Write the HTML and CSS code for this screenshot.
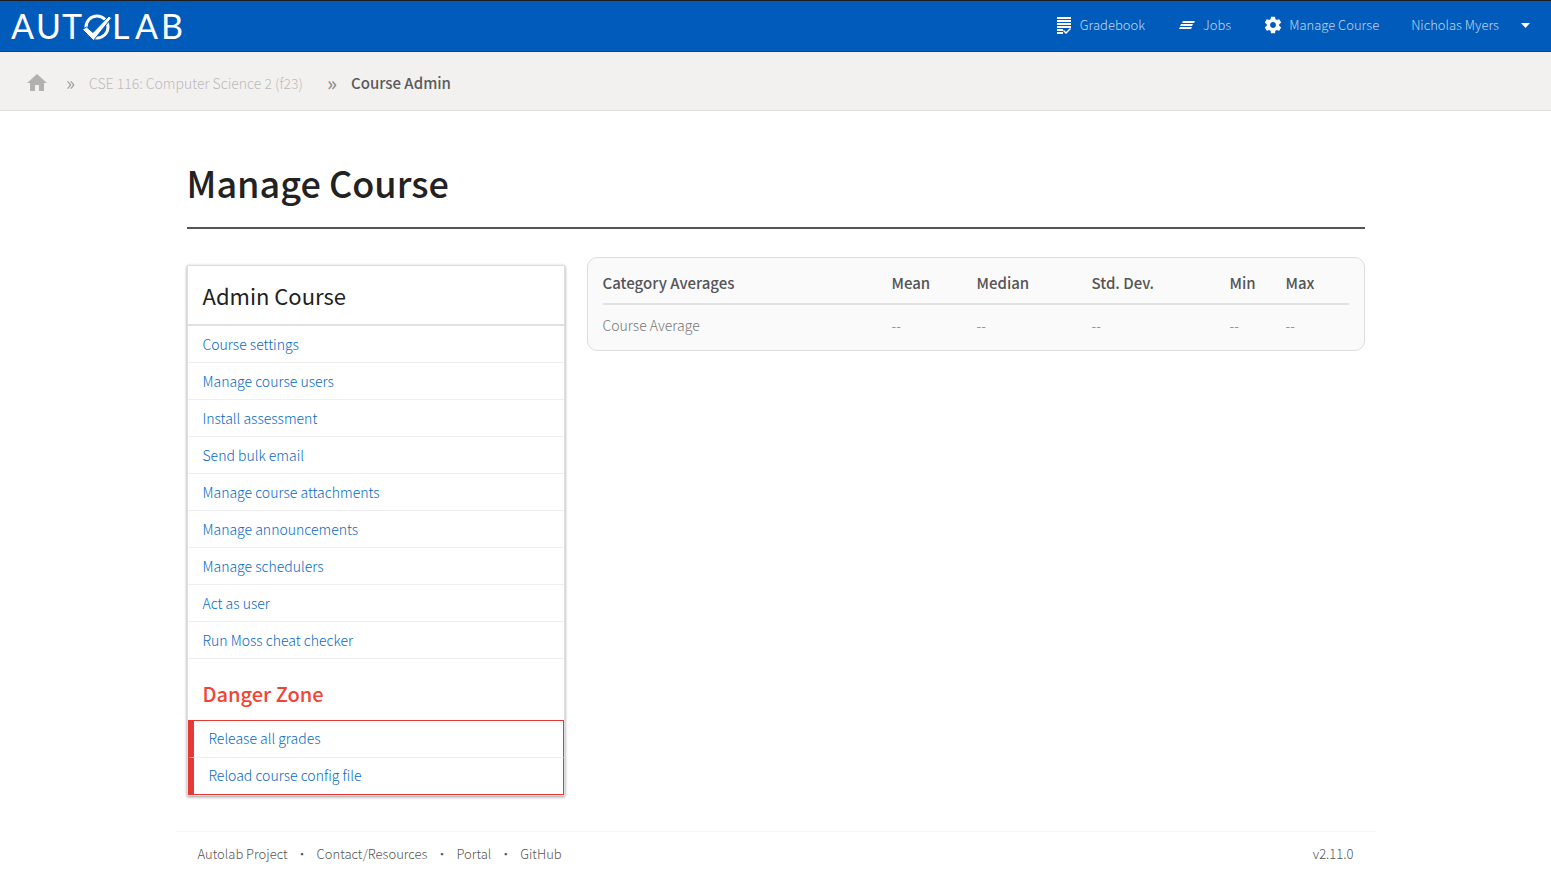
FILE: index.html
```html
<!doctype html>
<html lang="en">
<head>
    <meta charset="UTF-8">
    <meta name="viewport" content="width=device-width, initial-scale=1.0">
    <title>Manage Course - Autolab</title>
    <link rel="stylesheet" href="styles.css">
</head>
<body>
    <nav class="navbar">
        <a href="#" class="logo" aria-label="Autolab">
            <svg width="180" height="50" viewBox="0 0 180 50">
                <g class="logo__text">
                    <text x="0" y="38">A</text>
                    <text x="25" y="38">U</text>
                    <text x="51" y="38">T</text>
                    <text x="101" y="38">L</text>
                    <text x="124" y="38">A</text>
                    <text x="150" y="38">B</text>
                </g>
                <circle cx="86" cy="26" r="11" fill="none" stroke="#fff" stroke-width="3"/>
                <path d="M71.500 28.500l4-2.500 6.500 5.500L98 15l2.500 2L82.500 39.500z" fill="#fff" stroke="#005bbb" stroke-width="1"/>
            </svg>
        </a>
        <ul class="navbar__links">
            <li>
                <a href="#">
                    <svg class="icon" viewBox="0 0 20 20"><path d="M3 2h14v2H3zM3 5h14v2H3zM3 8h14v2H3zM3 11h14v2H3zM3 14h6v2H3zM3 17h6v2H3zM16 13l1 1-5 5-3-3 1-1 2 2z"/></svg>
                    Gradebook
                </a>
            </li>
            <li>
                <a href="#">
                    <svg class="icon" viewBox="0 0 20 20"><path d="M6 6h12l-1 2H5zM4 9h12l-1 2H3zM3 12h12l-1 2H2z"/></svg>
                    Jobs
                </a>
            </li>
            <li>
                <a href="#">
                    <svg class="icon" viewBox="0 0 24 24"><path d="M19.430 12.980c.04-.32.07-.64.07-.98s-.03-.66-.07-.98l2.110-1.650c.19-.15.24-.42.12-.64l-2-3.460c-.12-.22-.39-.3-.61-.22l-2.490 1c-.52-.4-1.080-.73-1.690-.98l-.38-2.650C14.460 2.180 14.250 2 14 2h-4c-.25 0-.46.18-.49.42l-.38 2.650c-.61.25-1.170.59-1.690.98l-2.490-1c-.23-.09-.49 0-.61.22l-2 3.460c-.13.22-.07.49.12.64l2.110 1.650c-.04.32-.07.65-.07.98s.03.66.07.98l-2.110 1.650c-.19.15-.24.42-.12.64l2 3.460c.12.22.39.3.61.22l2.490-1c.52.4 1.080.73 1.690.98l.38 2.650c.03.24.24.42.49.42h4c.25 0 .46-.18.49-.42l.38-2.650c.61-.25 1.170-.59 1.690-.98l2.490 1c.23.09.49 0 .61-.22l2-3.460c.12-.22.07-.49-.12-.64l-2.110-1.650zM12 15.500c-1.930 0-3.500-1.570-3.500-3.500s1.570-3.500 3.500-3.500 3.500 1.570 3.500 3.500-1.570 3.500-3.500 3.500z"/></svg>
                    Manage Course
                </a>
            </li>
            <li>
                <a href="#">
                    Nicholas Myers
                    <svg class="icon icon--caret" viewBox="0 0 20 20"><path d="M6 8h9l-4.500 5z"/></svg>
                </a>
            </li>
        </ul>
    </nav>

    <div class="breadcrumbs">
        <a href="#" class="breadcrumbs__home" aria-label="Home">
            <svg width="24" height="24" viewBox="0 0 24 24"><path d="M10 20v-6h4v6h5v-8h3L12 3 2 12h3v8z"/></svg>
        </a>
        <span class="breadcrumbs__sep">»</span>
        <a href="#">CSE 116: Computer Science 2 (f23)</a>
        <span class="breadcrumbs__sep breadcrumbs__sep--last">»</span>
        <span class="breadcrumbs__current">Course Admin</span>
    </div>

    <main class="container">
        <h1>Manage Course</h1>
        <div class="row">
            <div class="col">
                <div class="card">
                    <h2>Admin Course</h2>
                    <ul class="options">
                        <li><a href="#">Course settings</a></li>
                        <li><a href="#">Manage course users</a></li>
                        <li><a href="#">Install assessment</a></li>
                        <li><a href="#">Send bulk email</a></li>
                        <li><a href="#">Manage course attachments</a></li>
                        <li><a href="#">Manage announcements</a></li>
                        <li><a href="#">Manage schedulers</a></li>
                        <li><a href="#">Act as user</a></li>
                        <li><a href="#">Run Moss cheat checker</a></li>
                    </ul>
                    <h3>Danger Zone</h3>
                    <ul class="options options--danger">
                        <li><a href="#">Release all grades</a></li>
                        <li><a href="#">Reload course config file</a></li>
                    </ul>
                </div>
            </div>
            <div class="col">
                <div class="averages">
                    <table>
                        <colgroup>
                            <col class="col-name">
                            <col class="col-mean">
                            <col class="col-median">
                            <col class="col-dev">
                            <col class="col-min">
                            <col>
                        </colgroup>
                        <thead>
                            <tr>
                                <th>Category Averages</th>
                                <th>Mean</th>
                                <th>Median</th>
                                <th>Std. Dev.</th>
                                <th>Min</th>
                                <th>Max</th>
                            </tr>
                        </thead>
                        <tbody>
                            <tr>
                                <td>Course Average</td>
                                <td>--</td>
                                <td>--</td>
                                <td>--</td>
                                <td>--</td>
                                <td>--</td>
                            </tr>
                        </tbody>
                    </table>
                </div>
            </div>
        </div>
    </main>

    <footer class="footer">
        <ul>
            <li><a href="#">Autolab Project</a></li>
            <li><a href="#">Contact/Resources</a></li>
            <li><a href="#">Portal</a></li>
            <li><a href="#">GitHub</a></li>
        </ul>
        <span>v2.11.0</span>
    </footer>
</body>
</html>
```
FILE: styles.css
```css
*, ::before, ::after {
    padding: 0;
    margin: 0;
    box-sizing: border-box;
}
body {
    font-family: 'Source Sans Pro', 'Noto Sans CJK SC', sans-serif;
    font-size: 14px;
    font-weight: 300;
    line-height: 24px;
    color: #555555;
    background: #ffffff;
}
a {
    text-decoration: none;
    color: inherit;
}
ul {
    list-style: none;
}

/* top bar */
.navbar {
    display: flex;
    justify-content: space-between;
    align-items: center;
    height: 52px;
    padding-left: 11px;
    background: #005bbb;
    border-top: 1px solid #1c1c1c;
    border-bottom: 1px solid #0a4690;
}
.logo svg {
    display: block;
}
.logo__text {
    font-family: Lato, sans-serif;
    font-size: 34px;
    font-weight: 400;
    line-height: 40px;
    fill: #ffffff;
}
.navbar__links {
    display: flex;
    padding-bottom: 2px;
    color: rgba(255, 255, 255, .75);
    font-size: 13px;
}
.navbar__links a {
    display: flex;
    align-items: center;
    padding: 0 16px;
}
.icon {
    width: 20px;
    height: 20px;
    margin-right: 6px;
    fill: #ffffff;
}
.icon--caret {
    margin: 0 0 0 16px;
}

/* breadcrumbs */
.breadcrumbs {
    display: flex;
    align-items: center;
    height: 59px;
    padding: 4px 25px 0;
    background: #f3f1f0;
    border-bottom: 1px solid #dddddd;
    color: #bcbab9;
}
.breadcrumbs__home {
    display: flex;
    fill: #b3b1b0;
}
.breadcrumbs__sep {
    margin: 0 14px 0 17px;
    font-size: 20px;
    color: #8f8d8c;
}
.breadcrumbs__sep--last {
    margin-left: 24px;
    font-weight: 500;
}
.breadcrumbs__current {
    font-size: 15px;
    font-weight: 500;
    color: #5a5a5a;
}

/* content */
.container {
    max-width: 1200px;
    margin: 0 auto;
    padding-top: 43px;
}
h1 {
    margin: 0 11px;
    padding-bottom: 17px;
    border-bottom: 2px solid #555555;
    font-size: 36px;
    font-weight: 500;
    line-height: 56px;
    color: #222222;
}
.row {
    display: grid;
    grid-template-columns: 1fr 2fr;
    align-items: start;
    padding-top: 28px;
}
.col {
    padding: 0 11px;
}
.card {
    margin-top: 8px;
    border: 1px solid #dddddd;
    box-shadow: 0 1px 3px rgba(0, 0, 0, .4);
}
h2 {
    padding: 14px 15px;
    border-bottom: 2px solid #e0e0e0;
    font-size: 22px;
    font-weight: 400;
    line-height: 30px;
    color: #222222;
}
h3 {
    padding: 20px 15px 11px;
    font-size: 20px;
    font-weight: 500;
    line-height: 30px;
    color: #f44336;
}
.options a {
    display: block;
    height: 37px;
    padding: 0 15px;
    border-bottom: 1px solid #eeeeee;
    line-height: 36px;
    color: #0869c6;
}
.options--danger a {
    border-left: 6px solid #e53935;
    border-right: 1px solid #e53935;
    line-height: 34px;
}
.options--danger li:first-child a {
    height: 38px;
    border-top: 1px solid #e53935;
}
.options--danger li:last-child a {
    border-bottom-color: #e53935;
}

.averages {
    padding: 10px 15px 8px;
    border: 1px solid #dddddd;
    border-radius: 10px;
    background: #fafafa;
}
table {
    width: 100%;
    table-layout: fixed;
    border-collapse: collapse;
    text-align: left;
}
.col-name {
    width: 289px;
}
.col-mean {
    width: 85px;
}
.col-median {
    width: 115px;
}
.col-dev {
    width: 138px;
}
.col-min {
    width: 56px;
}
th {
    height: 36px;
    padding-bottom: 6px;
    border-bottom: 2px solid #e2e2e2;
    font-size: 15px;
    font-weight: 500;
}
td {
    height: 38px;
    padding-top: 2px;
    color: #777777;
}

.footer {
    display: flex;
    justify-content: space-between;
    max-width: 1200px;
    margin: 35px auto 0;
    padding: 10px 22px;
    border-top: 1px solid #f5f5f5;
    font-size: 13px;
}
.footer ul {
    display: flex;
}
.footer li + li::before {
    content: '·';
    margin: 0 8px;
}
```
